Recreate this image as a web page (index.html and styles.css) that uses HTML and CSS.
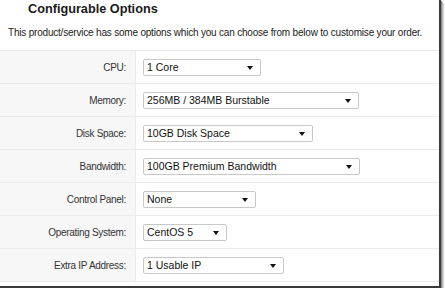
FILE: index.html
```html
<!DOCTYPE html>
<html>
<head>
<meta charset="utf-8">
<link rel="stylesheet" href="styles.css">
</head>
<body>
<div class="frame">
  <h3 class="title">Configurable Options</h3>
  <p class="intro">This product/service has some options which you can choose from below to customise your order.</p>
  <div class="options">
    <div class="row">
      <div class="label">CPU:</div>
      <div class="field"><span class="select" style="width:118px"><span>1 Core</span></span></div>
    </div>
    <div class="row">
      <div class="label">Memory:</div>
      <div class="field"><span class="select" style="width:216px"><span>256MB / 384MB Burstable</span></span></div>
    </div>
    <div class="row">
      <div class="label">Disk Space:</div>
      <div class="field"><span class="select" style="width:170px"><span>10GB Disk Space</span></span></div>
    </div>
    <div class="row">
      <div class="label">Bandwidth:</div>
      <div class="field"><span class="select" style="width:217px"><span>100GB Premium Bandwidth</span></span></div>
    </div>
    <div class="row">
      <div class="label">Control Panel:</div>
      <div class="field"><span class="select" style="width:113px"><span>None</span></span></div>
    </div>
    <div class="row">
      <div class="label">Operating System:</div>
      <div class="field"><span class="select" style="width:84px"><span>CentOS 5</span></span></div>
    </div>
    <div class="row">
      <div class="label">Extra IP Address:</div>
      <div class="field"><span class="select" style="width:141px"><span>1 Usable IP</span></span></div>
    </div>
  </div>
</div>
</body>
</html>
```

FILE: styles.css
```css
html, body {
  margin: 0;
  padding: 0;
  background: #ffffff;
}
body {
  font-family: "Liberation Sans", Arial, sans-serif;
  color: #333;
}
.frame {
  width: 441px;
  height: 288px;
  box-sizing: border-box;
  border-right: 2px solid #3a3a3a;
  border-bottom: 2px solid #3a3a3a;
  box-shadow: 1px 1px 0 #8a8a8a, 2px 2px 1px #b8b8b8, 3px 3px 1px #dcdcdc;
  overflow: hidden;
  display: flex;
  flex-direction: column;
}
.title {
  margin: 0;
  padding: 2px 0 0 28px;
  font-size: 12.7px;
  font-weight: bold;
  color: #1a1a1a;
  line-height: 15px;
}
.intro {
  margin: 0;
  padding: 10px 0 0 8px;
  font-size: 10px;
  letter-spacing: -0.2px;
  white-space: nowrap;
  line-height: 12px;
  color: #222;
}
.options {
  margin-top: 11px;
  border-top: 1px solid #ebebeb;
  border-bottom: 1px solid #ebebeb;
  display: flex;
  flex-direction: column;
  width: 439px;
}
.row {
  display: grid;
  grid-template-columns: 136px 1fr;
  height: 33px;
  box-sizing: border-box;
  border-bottom: 1px solid #ebebeb;
}
.row:last-child {
  border-bottom: none;
  height: 32px;
}
.label {
  background: #f7f7f7;
  border-right: 1px solid #ebebeb;
  text-align: right;
  padding-right: 9px;
  font-size: 10px;
  letter-spacing: -0.3px;
  color: #333;
  display: flex;
  align-items: center;
  justify-content: flex-end;
}
.field {
  display: flex;
  align-items: center;
  padding-left: 7px;
}
.select {
  position: relative;
  height: 17px;
  box-sizing: border-box;
  border: 1px solid #c8c8c8;
  border-radius: 2px;
  background: #fff;
  font-size: 10.5px;
  color: #111;
  display: flex;
  align-items: center;
  padding-left: 3px;
}
.select::after {
  content: "";
  position: absolute;
  right: 7px;
  top: 6px;
  border-left: 3px solid transparent;
  border-right: 3px solid transparent;
  border-top: 4px solid #111;
}
```
